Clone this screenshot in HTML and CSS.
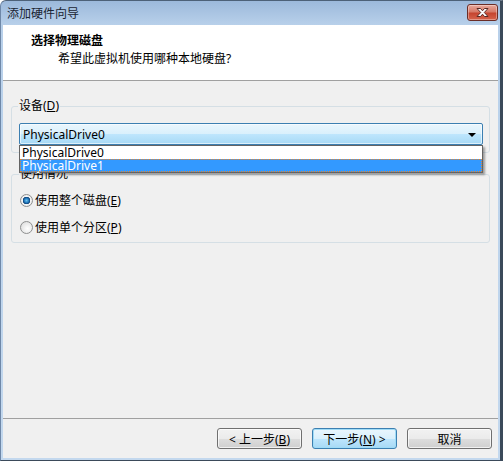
FILE: index.html
```html
<!DOCTYPE html>
<html lang="zh-CN">
<head>
    <meta charset="UTF-8">
    <title>添加硬件向导</title>
    <link rel="stylesheet" href="styles.css">
</head>
<body>

    <div class="window">
        <div class="titlebar">
            <span class="title">添加硬件向导</span>
            <button class="close-btn" title="关闭">
                <svg width="15" height="11" viewBox="0 0 15 11">
                    <path d="M2 1.5 L5.5 1.5 L7.5 3.8 L9.5 1.5 L13 1.5 L9.3 5.5 L13 9.5 L9.5 9.5 L7.5 7.2 L5.5 9.5 L2 9.5 L5.7 5.5 Z" fill="#fff" stroke="#5a2a24" stroke-width="1" stroke-linejoin="round"/>
                </svg>
            </button>
        </div>

        <div class="client">
            <div class="header">
                <h1>选择物理磁盘</h1>
                <p>希望此虚拟机使用哪种本地硬盘?</p>
            </div>

            <div class="content">
                <fieldset class="group">
                    <legend>设备(<u>D</u>)</legend>
                    <div class="combo-wrap">
                        <div class="combo">
                            <span>PhysicalDrive0</span>
                            <span class="arrow"></span>
                        </div>
                        <!-- 드롭다운 목록 -->
                        <ul class="dropdown">
                            <li>PhysicalDrive0</li>
                            <li class="selected">PhysicalDrive1</li>
                        </ul>
                    </div>
                </fieldset>

                <fieldset class="group usage">
                    <legend>使用情况</legend>
                    <label class="radio-row">
                        <span class="radio checked"></span>
                        <span>使用整个磁盘(<u>E</u>)</span>
                    </label>
                    <label class="radio-row">
                        <span class="radio"></span>
                        <span>使用单个分区(<u>P</u>)</span>
                    </label>
                </fieldset>
            </div>

            <div class="footer">
                <button class="btn">&lt; 上一步(<u>B</u>)</button>
                <button class="btn default">下一步(<u>N</u>) &gt;</button>
                <button class="btn">取消</button>
            </div>
        </div>
    </div>

</body>
</html>
```

FILE: styles.css
```css
body {
    margin: 0;
    padding: 0;
    width: 503px;
    height: 461px;
    overflow: hidden;
    font-family: "Noto Sans", "Noto Sans CJK SC", sans-serif;
    font-size: 12px;
    color: #000;
}
.window {
    box-sizing: border-box;
    width: 503px;
    height: 461px;
    display: flex;
    flex-direction: column;
    background: linear-gradient(#9cb9db, #b8d0ea 24px, #c3d8ee 100%);
    border-top: 1px solid #4d6178;
    border-left: 1px solid #6f88a8;
    border-right: 3px solid #3b4a5a;
    border-bottom: 1px solid #3b4a5a;
    border-top-left-radius: 6px;
    padding: 0 2px 2px 2px;
}
.titlebar {
    height: 24px;
    display: flex;
    align-items: center;
    justify-content: space-between;
    padding-left: 4px;
}
.title {
    color: #1b2533;
    font-size: 12px;
}
.close-btn {
    width: 31px;
    height: 17px;
    margin-top: -2px;
    padding: 0;
    display: flex;
    align-items: center;
    justify-content: center;
    border: 1px solid #6b2d26;
    border-radius: 3px;
    background: linear-gradient(#e9a99c, #d67a68 45%, #c5452f 55%, #d7644c);
    box-shadow: inset 0 0 0 1px rgba(255, 255, 255, 0.35);
}
.client {
    flex: 1;
    display: flex;
    flex-direction: column;
    background: #f0f0f0;
}
.header {
    height: 56px;
    box-sizing: border-box;
    background: #fff;
    border-bottom: 1px solid #a0a0a0;
    padding: 8px 0 0 28px;
}
.header h1 {
    margin: 0;
    font-size: 12px;
    line-height: 16px;
    font-weight: bold;
}
.header p {
    margin: 2px 0 0 27px;
    line-height: 16px;
}
.content {
    flex: 1;
    padding: 18px 8px 0 8px;
}
.group {
    margin: 0;
    padding: 0 6px 7px 7px;
    border: 1px solid #d5dfe5;
    border-radius: 3px;
}
.group legend {
    padding: 0 1px;
    margin-left: -1px;
    line-height: 14px;
}
.combo-wrap {
    position: relative;
    margin-top: 10px;
}
.combo {
    box-sizing: border-box;
    height: 22px;
    display: flex;
    align-items: center;
    justify-content: space-between;
    padding: 0 6px 0 3px;
    border: 1px solid #3c7fb1;
    border-radius: 2px;
    background: linear-gradient(#eaf6fd, #d9f0fc 50%, #bee6fd 51%, #a7d9f5);
    box-shadow: inset 0 0 0 1px rgba(255, 255, 255, 0.6);
}
.arrow {
    width: 0;
    height: 0;
    border-left: 4px solid transparent;
    border-right: 4px solid transparent;
    border-top: 4px solid #000;
    margin-top: 2px;
}
.dropdown {
    position: absolute;
    top: 100%;
    left: 0;
    right: 0;
    margin: 0;
    padding: 0;
    list-style: none;
    background: #fff;
    border: 1px solid #646464;
    box-shadow: 2px 2px 2px rgba(0, 0, 0, 0.35);
    z-index: 2;
}
.dropdown li {
    height: 13px;
    line-height: 13px;
    padding-left: 2px;
}
.dropdown li.selected {
    background: #3399ff;
    color: #fff;
    outline: 1px dotted #e8862c;
    outline-offset: -1px;
}
.usage {
    margin-top: 14px;
    padding: 0 8px 7px 8px;
}
.radio-row {
    display: flex;
    align-items: center;
    gap: 2px;
    height: 16px;
    margin-top: 11px;
}
.radio {
    box-sizing: border-box;
    width: 13px;
    height: 13px;
    border-radius: 50%;
    border: 1px solid #8e8f8f;
    background: radial-gradient(circle at 60% 60%, #fff, #d8d8d8);
}
.radio.checked {
    background: radial-gradient(circle, #6cc4f0 0, #1b6fb4 2.5px, #0e3f72 3.5px, #f4f4f4 4px, #dcdcdc 100%);
}
.footer {
    border-top: 1px solid #a0a0a0;
    padding: 9px 6px 9px 0;
    display: flex;
    justify-content: flex-end;
    gap: 10px;
}
.btn {
    width: 85px;
    height: 21px;
    padding: 0;
    font-family: "Noto Sans", "Noto Sans CJK SC", sans-serif;
    font-size: 12px;
    color: #000;
    border: 1px solid #707070;
    border-radius: 3px;
    background: linear-gradient(#f2f2f2, #ebebeb 50%, #dddddd 51%, #cfcfcf);
    box-shadow: inset 0 0 0 1px rgba(255, 255, 255, 0.7);
}
.btn.default {
    border-color: #3c7fb1;
    background: linear-gradient(#eaf6fd, #d9f0fc 50%, #bee6fd 51%, #a7d9f5);
    box-shadow: inset 0 0 0 1px #9fdcf7;
}
```
